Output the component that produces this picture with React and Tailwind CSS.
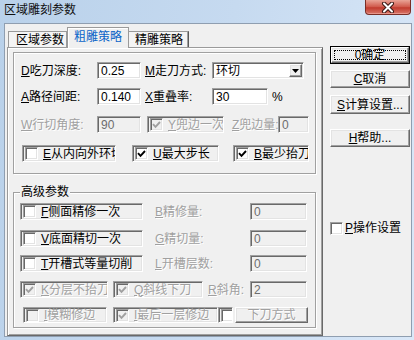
const SUNKEN =
  'border border-t-[#a0a0a0] border-l-[#a0a0a0] border-r-white border-b-white shadow-[inset_1px_1px_0_#696969,inset_-1px_-1px_0_#e3e3e3]';
const RAISED =
  'border border-t-white border-l-white border-r-[#696969] border-b-[#696969] shadow-[inset_-1px_-1px_0_#a0a0a0,inset_1px_1px_0_#e3e3e3] bg-[#f0f0f0]';
const ETCHED = 'border border-[#a0a0a0] shadow-[inset_1px_1px_0_#fff,1px_1px_0_#fff]';
const DIM = 'text-[#a0a0a0] [text-shadow:1px_1px_0_#fff]';

function Edit({ value, w, disabled }) {
  return (
    <div className={`h-[17px] ${w} shrink-0 flex items-center pl-[3px] ${SUNKEN} ${disabled ? 'bg-[#f0f0f0] text-[#6d6d6d]' : 'bg-white text-black'}`}>
      {value}
    </div>
  );
}

function Box({ checked, disabled }) {
  return (
    <span className={`w-[13px] h-[13px] shrink-0 flex items-center justify-center ${SUNKEN} ${disabled ? 'bg-[#f0f0f0]' : 'bg-white'}`}>
      {checked && (
        <svg width="9" height="9" viewBox="0 0 9 9">
          <path d="M1 4.2 L3.5 6.8 L8 2" fill="none" stroke={disabled ? '#a0a0a0' : '#000'} strokeWidth="1.9" />
        </svg>
      )}
    </span>
  );
}

function FrameCheck({ w, k, label, checked, disabled, boxDisabled, className = '' }) {
  return (
    <div className={`h-full ${w} shrink-0 flex items-center pl-[2px] gap-[5px] overflow-hidden whitespace-nowrap ${SUNKEN} ${className}`}>
      <Box checked={checked} disabled={boxDisabled ?? disabled} />
      {label && (
        <span className={disabled ? DIM : ''}>
          <u>{k}</u>
          {label}
        </span>
      )}
    </div>
  );
}

function Label({ w, k, text, disabled, className = '' }) {
  return (
    <span className={`${w} shrink-0 whitespace-nowrap ${disabled ? DIM : ''} ${className}`}>
      <u>{k}</u>
      {text}
    </span>
  );
}

function Button({ children, className = '' }) {
  return (
    <div className={`w-[80px] h-[18px] flex items-center justify-center whitespace-nowrap ${RAISED} ${className}`}>
      {children}
    </div>
  );
}

function CloseButton() {
  return (
    <div className="mr-[3px] w-[46px] h-[15px] rounded-b-[4px] border border-t-0 border-[#7a2e26] bg-[linear-gradient(#e9a497,#d0584a_50%,#c13b2e_55%,#d8776a)] flex items-center justify-center shadow-[inset_0_-1px_0_#e8958a]">
      <svg width="14" height="11" viewBox="0 0 14 11">
        <path d="M3 1.5 L11 9.5 M11 1.5 L3 9.5" stroke="#3b1a16" strokeWidth="4" strokeLinecap="round" />
        <path d="M3 1.5 L11 9.5 M11 1.5 L3 9.5" stroke="#fff" strokeWidth="2" strokeLinecap="round" />
      </svg>
    </div>
  );
}

export default function App() {
  return (
    <div className="w-[414px] h-[340px] flex flex-col bg-[linear-gradient(100deg,#b9d1ea_0%,#c6daf0_50%,#dae8f8_100%)] text-[12px] leading-[14px] text-black [font-family:'Liberation_Sans','Noto_Sans_CJK_SC',sans-serif]">
      <div className="h-[23px] shrink-0 flex items-start justify-between">
        <span className="ml-[4px] mt-[3px] leading-[15px] text-[#111]">区域雕刻参数</span>
        <CloseButton />
      </div>

      <div className="flex-1 ml-[4px] mr-[2px] mb-[3px] border border-[#8f9eb0] bg-[#f0f0f0] flex">
        {/* tabs + panel */}
        <div className="ml-[2px] w-[316px] pt-[3px] flex flex-col">
          <div className="h-[20px] flex items-end relative z-10">
            <div className="ml-[1px] w-[59px] h-[16px] pl-[7px] pt-[1px] border border-b-0 border-[#9a9a9a] bg-[#f4f4f4]">区域参数</div>
            <div className="w-[62px] h-[21px] -mb-px pt-[2px] text-center text-[#0a64c8] border border-b-0 border-[#9a9a9a] shadow-[inset_1px_1px_0_#fff] bg-[#f0f0f0]">粗雕策略</div>
            <div className="w-[60px] h-[16px] pl-[6px] pt-[1px] border border-b-0 border-l-0 border-t-[#9a9a9a] border-r-[#5a5a5a] bg-[#f4f4f4] shadow-[inset_-1px_0_0_#a0a0a0]">精雕策略</div>
          </div>

          <div className="h-[289px] border border-t-[#9a9a9a] border-l-[#9a9a9a] border-r-[#696969] border-b-[#696969] shadow-[inset_1px_1px_0_#fff,inset_-1px_-1px_0_#a0a0a0] pl-[5px] pt-[4px] flex flex-col">
            {/* upper frame */}
            <div className={`w-[303px] h-[122px] shrink-0 flex flex-col ${ETCHED}`}>
              <div className="mt-[9px] h-[17px] pl-[7px] flex items-center">
                <Label w="w-[76px]" k="D" text="吃刀深度:" />
                <Edit w="w-[44px]" value="0.25" />
                <Label w="w-[67px]" className="ml-[4px]" k="M" text="走刀方式:" />
                <div className={`w-[92px] h-[17px] flex items-center bg-white ${SUNKEN}`}>
                  <span className="flex-1 pl-[3px]">环切</span>
                  <span className={`w-[13px] h-[13px] mr-[1px] flex items-center justify-center ${RAISED}`}>
                    <svg width="7" height="4" viewBox="0 0 7 4">
                      <path d="M0 0 H7 L3.5 4 Z" fill="#000" />
                    </svg>
                  </span>
                </div>
              </div>

              <div className="mt-[9px] h-[17px] pl-[7px] flex items-center">
                <Label w="w-[76px]" k="A" text="路径间距:" />
                <Edit w="w-[44px]" value="0.140" />
                <Label w="w-[67px]" className="ml-[4px]" k="X" text="重叠率:" />
                <Edit w="w-[56px]" value="30" />
                <span className="ml-[4px]">%</span>
              </div>

              <div className="mt-[11px] h-[17px] pl-[7px] flex items-center">
                <Label w="w-[76px]" k="W" text="行切角度:" disabled />
                <Edit w="w-[44px]" value="90" disabled />
                <FrameCheck w="w-[77px]" className="ml-[6px]" k="Y" label="兜边一次" checked disabled />
                <Label w="w-[46px]" className="ml-[8px]" k="Z" text="兜边量:" disabled />
                <Edit w="w-[31px]" value="0" disabled />
              </div>

              <div className="mt-[12px] h-[17px] pl-[8px] flex items-center">
                <FrameCheck w="w-[94px]" k="E" label="从内向外环切" />
                <FrameCheck w="w-[87px]" className="ml-[16px]" k="U" label="最大步长" checked />
                <FrameCheck w="w-[76px]" className="ml-[14px]" k="B" label="最少抬刀" checked />
              </div>
            </div>

            {/* 高级参数 */}
            <div className={`relative mt-[18px] w-[303px] h-[136px] shrink-0 flex flex-col ${ETCHED}`}>
              <span className="absolute -top-[8px] left-[6px] px-[1px] bg-[#f0f0f0]">高级参数</span>

              <div className="mt-[10px] h-[17px] pl-[6px] flex items-center">
                <FrameCheck w="w-[123px]" k="F" label="侧面精修一次" />
                <Label w="w-[95px]" className="ml-[12px]" k="B" text="精修量:" disabled />
                <Edit w="w-[57px]" value="0" disabled />
              </div>

              <div className="mt-[10px] h-[17px] pl-[6px] flex items-center">
                <FrameCheck w="w-[123px]" k="V" label="底面精切一次" />
                <Label w="w-[95px]" className="ml-[12px]" k="G" text="精切量:" disabled />
                <Edit w="w-[57px]" value="0" disabled />
              </div>

              <div className="mt-[8px] h-[17px] pl-[6px] flex items-center">
                <FrameCheck w="w-[123px]" k="T" label="开槽式等量切削" />
                <Label w="w-[95px]" className="ml-[12px]" k="L" text="开槽层数:" disabled />
                <Edit w="w-[57px]" value="0" disabled />
              </div>

              <div className="mt-[9px] h-[17px] pl-[6px] flex items-center">
                <FrameCheck w="w-[88px]" k="K" label="分层不抬刀" checked disabled />
                <FrameCheck w="w-[90px]" className="ml-[5px]" k="Q" label="斜线下刀" checked disabled />
                <Label w="w-[42px]" className="ml-[5px]" k="R" text="斜角:" disabled />
                <Edit w="w-[57px]" value="2" disabled />
              </div>

              <div className="mt-[9px] h-[16px] pl-[9px] flex items-center">
                <FrameCheck w="w-[84px]" k="I" label="模糊修边" disabled />
                <FrameCheck w="w-[105px]" className="ml-[6px]" k="I" label="最后一层修边" checked disabled />
                <FrameCheck w="w-[15px]" boxDisabled={false} />
                <div className={`ml-[2px] w-[73px] h-[16px] flex items-center justify-center ${RAISED} ${DIM}`}>下刀方式</div>
              </div>
            </div>
          </div>
        </div>

        {/* buttons */}
        <div className="ml-[7px] pt-[22px] flex flex-col">
          <div className="w-[80px] h-[18px] border border-black">
            <div className={`h-full flex p-[2px] ${RAISED}`}>
              <div className="flex-1 border border-dotted border-black flex items-center justify-center">0确定</div>
            </div>
          </div>
          <Button className="mt-[6px]"><u>C</u>取消</Button>
          <Button className="mt-[7px] h-[19px]"><u>S</u>计算设置...</Button>
          <Button className="mt-[15px]"><u>H</u>帮助...</Button>
          <div className="mt-[74px] flex items-center gap-[2px]">
            <Box />
            <span><u>P</u>操作设置</span>
          </div>
        </div>
      </div>
    </div>
  );
}
